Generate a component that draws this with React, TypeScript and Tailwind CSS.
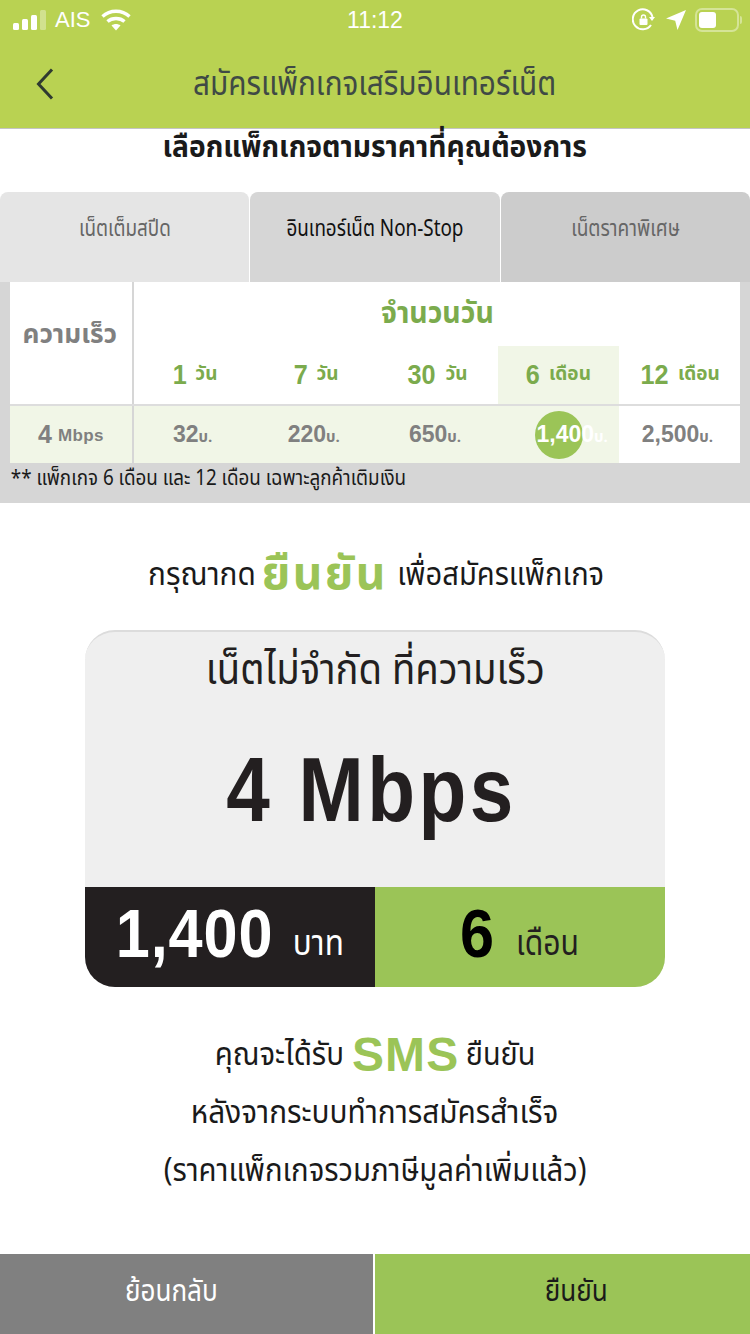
import React from 'react';

const THAI = "font-['Noto_Sans_Thai','Noto_Sans','Liberation_Sans',sans-serif]";
const LATIN = "font-['Liberation_Sans',sans-serif]";

const DAYS = [
  { n: '1', unit: 'วัน', price: '32', active: false },
  { n: '7', unit: 'วัน', price: '220', active: false },
  { n: '30', unit: 'วัน', price: '650', active: false },
  { n: '6', unit: 'เดือน', price: '1,400', active: true },
  { n: '12', unit: 'เดือน', price: '2,500', active: false },
];

function StatusBar() {
  return (
    <div className={`flex h-[40px] items-center justify-between pl-[13px] pr-[8px] text-white ${LATIN}`}>
      <div className="flex w-[200px] items-center">
        <svg width="34" height="20" viewBox="0 0 34 20" fill="white">
          <rect x="0" y="13" width="6" height="7" rx="1.5" />
          <rect x="9" y="9" width="6" height="11" rx="1.5" />
          <rect x="18" y="5" width="6" height="15" rx="1.5" />
          <rect x="27" y="0" width="6" height="20" rx="1.5" opacity="0.35" />
        </svg>
        <span className="ml-[8px] text-[22px] leading-none">AIS</span>
        <svg className="ml-[11px]" width="30" height="22" viewBox="0 0 30 22" fill="none" stroke="white" strokeWidth="3.4">
          <path d="M1.5 7.5C9 .5 21 .5 28.5 7.5" />
          <path d="M6.5 12.5C11 8.5 19 8.5 23.5 12.5" />
          <path d="M15 21.5l-4.5-5c2.6-2 6.4-2 9 0z" fill="white" stroke="none" />
        </svg>
      </div>
      <span className="text-[23px] leading-none">11:12</span>
      <div className="flex w-[205px] items-center justify-end">
        <svg width="24" height="24" viewBox="0 0 24 24" fill="none" stroke="white" strokeWidth="2">
          <path d="M19 17a10 10 0 1 1 1.5-8" />
          <path d="M17 9h6l-3 4z" fill="white" stroke="none" />
          <rect x="7.5" y="10.5" width="8" height="6.5" rx="1" fill="white" stroke="none" />
          <path d="M9.5 10.5V9a2 2 0 0 1 4 0v1.5" strokeWidth="1.4" />
        </svg>
        <svg className="ml-[9px]" width="22" height="22" viewBox="0 0 22 22" fill="white">
          <path d="M21 1 12.5 21l-2.3-9.2L1 9.5z" />
        </svg>
        <div className="ml-[8px] flex h-[24px] w-[44px] items-center rounded-[7px] border-2 border-white/40 p-[2px]">
          <div className="h-[16px] w-[17px] rounded-[3px] bg-white" />
        </div>
        <div className="ml-[1px] h-[8px] w-[2px] rounded-r-sm bg-white/40" />
      </div>
    </div>
  );
}

export default function App() {
  return (
    <div className={`flex h-[1334px] w-[750px] flex-col overflow-hidden bg-white ${THAI}`}>
      <div className="h-[129px] shrink-0 border-b border-[#c4c4c4] bg-[#b9d252]">
        <StatusBar />
        <div className="relative flex h-[88px] items-center justify-center">
          <svg className="absolute left-[36px] top-[28px]" width="18" height="32" viewBox="0 0 18 32" fill="none" stroke="#2f3a30" strokeWidth="3">
            <path d="M16 1.5 2.5 16 16 30.5" />
          </svg>
          <span className="inline-block scale-x-[.875] pt-[2px] text-[34px] leading-none whitespace-nowrap text-[#3f4a45]">สมัครแพ็กเกจเสริมอินเทอร์เน็ต</span>
        </div>
      </div>

      <div className="flex h-[63px] shrink-0 items-center justify-center pb-[25px] leading-none text-[#1a1a1a]">
        <span className="inline-block scale-x-[.94] text-[30px] font-bold whitespace-nowrap">เลือกแพ็กเกจตามราคาที่คุณต้องการ</span>
      </div>

      <div className="flex h-[90px] shrink-0 gap-[1px] text-[23px] leading-[30px]">
        <div className="flex flex-1 justify-center rounded-t-lg bg-[#e5e5e5] pt-[22px] text-[#666666]"><span className="inline-block scale-x-[.82] whitespace-nowrap">เน็ตเต็มสปีด</span></div>
        <div className="flex flex-1 justify-center rounded-t-lg bg-[#d6d6d6] pt-[22px] text-[#111111]"><span className="inline-block scale-x-[.82] whitespace-nowrap">อินเทอร์เน็ต Non-Stop</span></div>
        <div className="flex flex-1 justify-center rounded-t-lg bg-[#cccccc] pt-[22px] text-[#666666]"><span className="inline-block scale-x-[.83] whitespace-nowrap">เน็ตราคาพิเศษ</span></div>
      </div>

      <div className="h-[221px] shrink-0 bg-[#d6d6d6] px-[10px]">
        <div className="grid h-[181px] grid-cols-[122px_2px_1fr] grid-rows-[122px_2px_57px] bg-white">
          <div className="flex items-center justify-center pb-[16px] font-bold text-[#808080]">
            <span className="-ml-[3px] inline-block scale-x-[.97] text-[27px]">ความเร็ว</span>
          </div>
          <div className="bg-[#d6d6d6]" />
          <div className="flex flex-col">
            <div className="flex h-[64px] items-center justify-center font-bold text-[#7bab4d]">
              <span className="inline-block scale-x-[.95] text-[30px]">จำนวนวัน</span>
            </div>
            <div className="grid flex-1 grid-cols-5">
              {DAYS.map(d => (
                <div key={d.n} className={`flex items-center justify-center gap-[8px] font-bold text-[#7bab4d] ${d.active ? 'bg-[#f1f6e7]' : ''}`}>
                  <span className={`inline-block scale-x-[.9] text-[28px] leading-none ${LATIN}`}>{d.n}</span>
                  <span className="text-[19px]">{d.unit}</span>
                </div>
              ))}
            </div>
          </div>
          <div className="col-span-3 bg-[#dddddd]" />
          <div className="flex items-center justify-center gap-[6px] bg-[#f1f6e7] font-bold text-[#808080]">
            <span className={`text-[25px] ${LATIN}`}>4</span>
            <span className={`pt-[3px] text-[17px] tracking-wide ${LATIN}`}>Mbps</span>
          </div>
          <div className="bg-[#d6d6d6]" />
          <div className="grid grid-cols-5">
            {DAYS.map(d => (
              <div key={d.n} className={`relative flex items-center justify-center ${d.n === '12' ? 'bg-white' : 'bg-[#f1f6e7]'}`}>
                {d.active && <div className="absolute left-[37px] top-[5px] h-[48px] w-[48px] rounded-full bg-[#9bc457]" />}
                <span className={`relative font-bold ${d.active ? 'pl-[28px] text-white' : 'pr-[4px] text-[#808080]'}`}>
                  <span className={`text-[23px] ${LATIN}`}>{d.price}</span>
                  <span className="text-[15px]">บ.</span>
                </span>
              </div>
            ))}
          </div>
        </div>
        <div className="origin-left scale-x-[.855] pl-[1px] pt-[1px] text-[22px] leading-[30px] whitespace-nowrap text-[#1a1a1a]">** แพ็กเกจ 6 เดือน และ 12 เดือน เฉพาะลูกค้าเติมเงิน</div>
      </div>

      <div className="flex h-[127px] shrink-0 items-center justify-center gap-[2px] pl-[8px] pt-[16px] text-[32px] text-[#1a1a1a]">
        <span className="inline-block scale-x-[.93]">กรุณากด</span>
        <span className="text-[46px] font-bold leading-none tracking-wider text-[#9bc457]">ยืนยัน</span>
        <span className="-ml-[3px] inline-block scale-x-[.91]">เพื่อสมัครแพ็กเกจ</span>
      </div>

      <div className="mx-[85px] flex h-[357px] shrink-0 flex-col overflow-hidden rounded-[30px] border-t-2 border-[#dcdcdc] bg-[#efefef]">
        <div className="flex flex-1 flex-col items-center">
          <div className="inline-block scale-x-[.91] pt-[10px] text-[42px] leading-[58px] whitespace-nowrap text-[#231f20]">เน็ตไม่จำกัด ที่ความเร็ว</div>
          <div className={`inline-block scale-x-[.87] pr-[8px] pt-[40px] text-[90px] font-bold leading-[100px] tracking-[4px] whitespace-nowrap text-[#231f20] ${LATIN}`}>4 Mbps</div>
        </div>
        <div className="grid h-[100px] grid-cols-2">
          <div className="flex items-center justify-center gap-[8px] bg-[#231f20] pr-[6px] text-white">
            <span className={`inline-block scale-x-[.9] pb-[9px] text-[68px] font-bold leading-none tracking-[1px] ${LATIN}`}>1,400</span>
            <span className="inline-block scale-x-[.9] pt-[14px] text-[35px] leading-none">บาท</span>
          </div>
          <div className="flex items-center justify-center gap-[15px] bg-[#9bc457] pl-[2px] text-black">
            <span className={`inline-block pb-[9px] scale-x-[.9] text-[68px] font-bold leading-none ${LATIN}`}>6</span>
            <span className="inline-block scale-x-[.86] pt-[14px] text-[35px] leading-none text-[#231f20]">เดือน</span>
          </div>
        </div>
      </div>

      <div className="flex flex-1 flex-col items-center pt-[39px] text-[32px] leading-[58px] text-[#1a1a1a]">
        <div className="flex items-center gap-[2px] pr-[2px]">
          <span className="inline-block scale-x-[.92]">คุณจะได้รับ</span>
          <span className={`text-[48px] font-bold leading-none tracking-wide text-[#9bc457] ${LATIN}`}>SMS</span>
          <span className="inline-block scale-x-[.9]">ยืนยัน</span>
        </div>
        <div className="scale-x-[.93] whitespace-nowrap">หลังจากระบบทำการสมัครสำเร็จ</div>
        <div className="scale-x-[.915] whitespace-nowrap">(ราคาแพ็กเกจรวมภาษีมูลค่าเพิ่มแล้ว)</div>
      </div>

      <div className="flex h-[80px] shrink-0 gap-[2px] text-[30px]">
        <button className="w-[373px] bg-[#808080] pb-[3px] pr-[30px] text-white"><span className="inline-block scale-x-[.87]">ย้อนกลับ</span></button>
        <button className="flex-1 bg-[#9bc457] pb-[3px] pl-[28px] text-[#1a1a1a]"><span className="inline-block scale-x-[.87]">ยืนยัน</span></button>
      </div>
    </div>
  );
}
